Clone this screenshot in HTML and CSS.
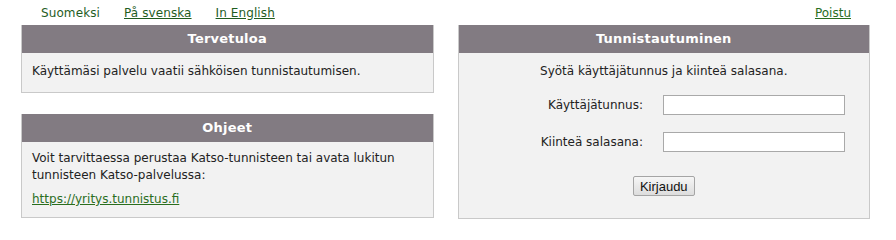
FILE: index.html
```html
<!DOCTYPE html>
<html lang="fi">
<head>
<meta charset="utf-8">
<title>Tunnistautuminen</title>
<link rel="stylesheet" href="styles.css">
</head>
<body>
<div class="page">
  <div class="topbar">
    <nav class="langs">
      <span class="lang current">Suomeksi</span>
      <a class="lang" href="#">På svenska</a>
      <a class="lang" href="#">In English</a>
    </nav>
    <a class="logout" href="#">Poistu</a>
  </div>
  <div class="columns">
    <div class="col">
      <section class="box welcome">
        <h2 class="box-head">Tervetuloa</h2>
        <div class="box-body">
          <p class="text">Käyttämäsi palvelu vaatii sähköisen tunnistautumisen.</p>
        </div>
      </section>
      <section class="box help">
        <h2 class="box-head">Ohjeet</h2>
        <div class="box-body">
          <p class="text">Voit tarvittaessa perustaa Katso-tunnisteen tai avata lukitun tunnisteen Katso-palvelussa:</p>
          <p class="text link-line"><a href="#">https://yritys.tunnistus.fi</a></p>
        </div>
      </section>
    </div>
    <div class="col">
      <section class="box login">
        <h2 class="box-head">Tunnistautuminen</h2>
        <div class="box-body">
          <p class="text intro">Syötä käyttäjätunnus ja kiinteä salasana.</p>
          <form class="form">
            <label class="label" for="u">Käyttäjätunnus:</label>
            <input class="input" id="u" type="text">
            <label class="label" for="p">Kiinteä salasana:</label>
            <input class="input" id="p" type="password">
          </form>
          <div class="actions"><button class="button" type="button">Kirjaudu</button></div>
        </div>
      </section>
    </div>
  </div>
</div>
</body>
</html>
```

FILE: styles.css
```css
html, body {
  margin: 0;
  padding: 0;
  background: #ffffff;
}
body {
  font-family: "DejaVu Sans", Verdana, sans-serif;
  font-size: 12px;
  color: #222222;
}
.page {
  width: 849px;
  padding-left: 21px;
}
.topbar {
  display: flex;
  justify-content: space-between;
  align-items: center;
  height: 25px;
}
.langs {
  display: flex;
  gap: 24px;
  padding-left: 20px;
}
.lang {
  color: #1f5d1f;
  letter-spacing: 0.1px;
}
a {
  color: #2a6e1e;
}
.lang.current {
  text-decoration: none;
}
.logout {
  margin-right: 19px;
}
.columns {
  display: flex;
  gap: 24px;
}
.col {
  flex: 1;
  display: flex;
  flex-direction: column;
  gap: 21px;
}
.box {
  background: #f2f2f2;
  border: 1px solid #c9c9c9;
  border-top: none;
}
.box-head {
  margin: 0;
  height: 28px;
  line-height: 28px;
  background: #827b82;
  color: #ffffff;
  text-align: center;
  font-size: 13px;
  font-weight: bold;
  letter-spacing: 0.2px;
}
.box-body {
  padding: 0 10px;
}
.text {
  margin: 0;
  line-height: 17px;
}
.welcome .box-body {
  padding-top: 10px;
  padding-bottom: 12px;
}
.help .box-body {
  padding-top: 8px;
  padding-bottom: 9px;
}
.link-line {
  margin-top: 7px;
}
.login .box-body {
  padding: 10px 24px 22px 10px;
}
.intro {
  text-align: center;
  padding-left: 14px;
}
.form {
  display: grid;
  grid-template-columns: 1fr 182px;
  column-gap: 20px;
  row-gap: 17px;
  align-items: center;
  margin-top: 15px;
}
.label {
  text-align: right;
}
.input {
  box-sizing: border-box;
  width: 182px;
  height: 20px;
  margin: 0;
  border: 1px solid #a9a9a9;
  background: #ffffff;
  padding: 1px 3px;
}
.actions {
  display: flex;
  justify-content: center;
  margin-top: 24px;
  padding-left: 14px;
}
.button {
  box-sizing: border-box;
  height: 20px;
  padding: 0 6px;
  font-family: "Liberation Sans", Arial, sans-serif;
  font-size: 13px;
  color: #111111;
  background: linear-gradient(#f6f6f6, #dddddd);
  border: 1px solid #a5a5a5;
  border-radius: 2px;
}
```
